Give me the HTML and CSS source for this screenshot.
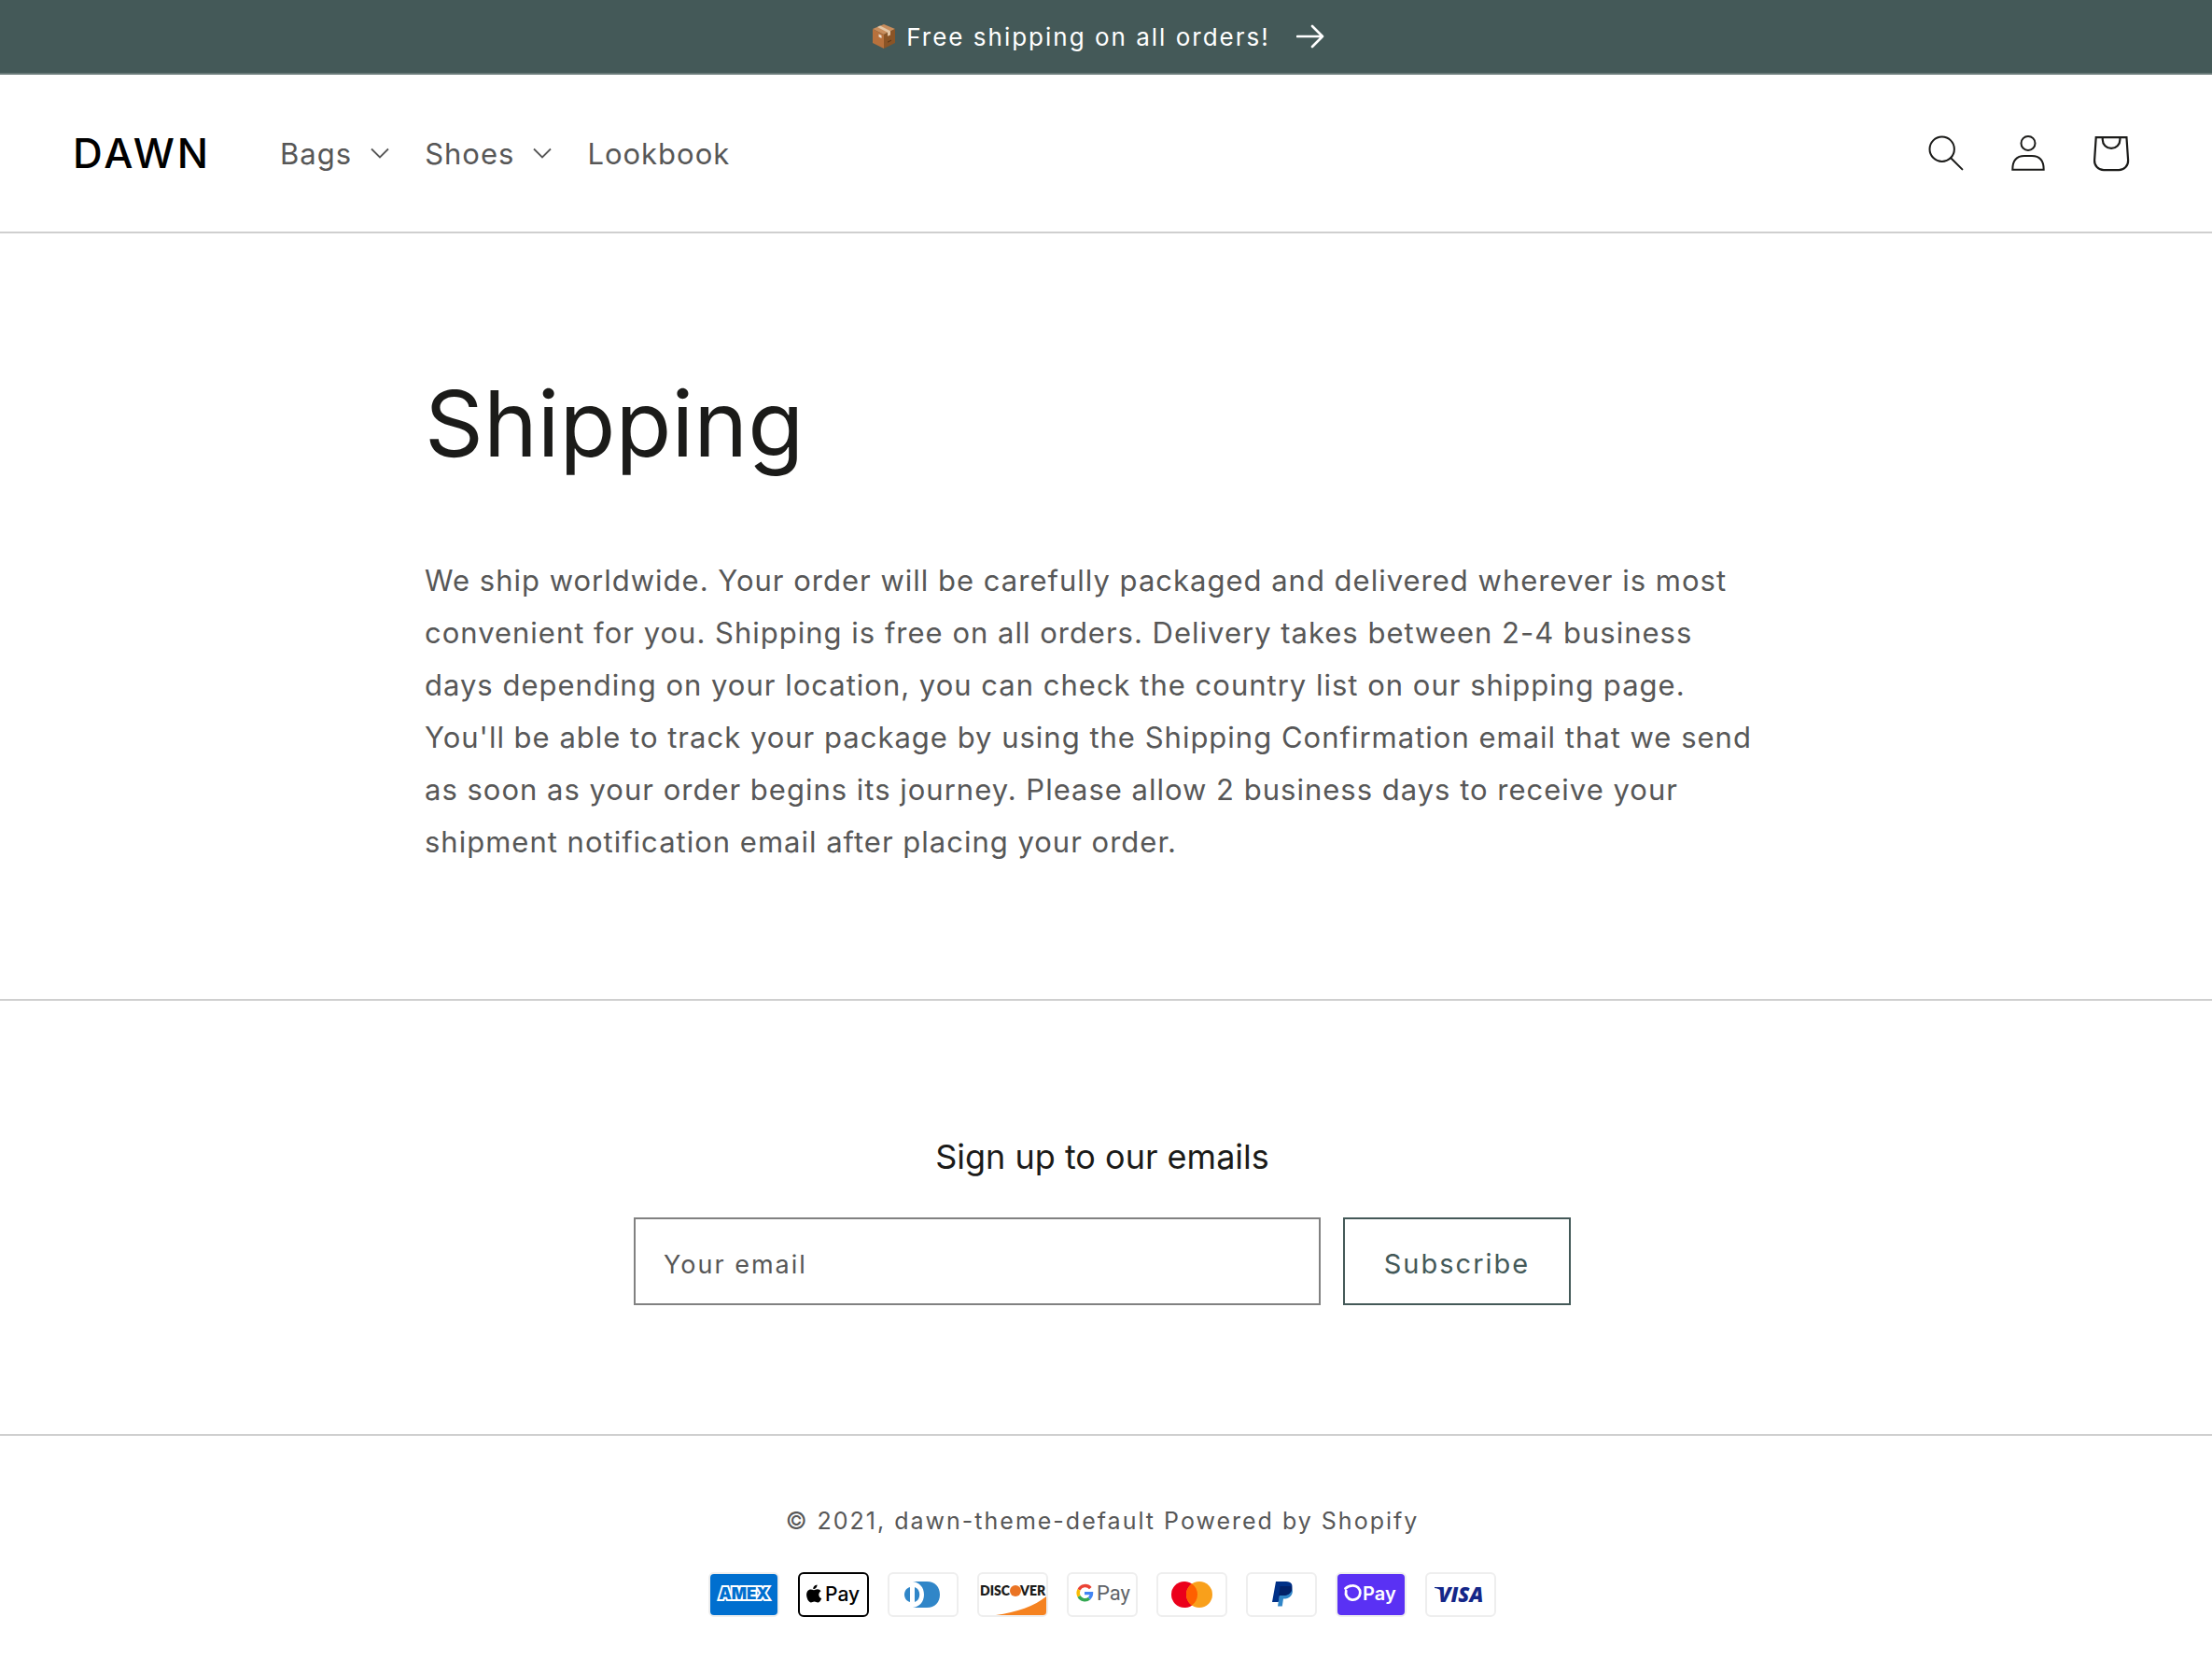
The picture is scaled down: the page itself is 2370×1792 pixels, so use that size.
FILE: index.html
```html
<!DOCTYPE html>
<html lang="en">
<head>
<meta charset="utf-8">
<meta name="viewport" content="width=device-width, initial-scale=1">
<title>Shipping – DAWN</title>
<link rel="stylesheet" href="styles.css">
</head>
<body>
<a class="announcement" href="#">
  <svg class="announcement-box" viewBox="0 0 24 26" aria-hidden="true">
    <path fill="#c98d5c" d="M12 0 24 5 12 11 0 5z"/>
    <path fill="#b8713c" d="M0 5l12 6v15L0 20z"/>
    <path fill="#8a5426" d="M24 5l-12 6v15l12-6z"/>
    <path fill="#e3c6a6" d="M5 3l3-1.400L19 7.200v4.300l-3 1.300V8.800z"/>
    <path fill="#e8dccd" d="M6.500 10.500l3 1.500v3l-3-1.500z"/>
    <path fill="#5f3817" d="M16 18.500l4-2v1.200l-4 2z"/>
  </svg>
  <span>Free shipping on all orders!</span>
  <svg class="announcement-arrow" viewBox="0 0 30 26" aria-hidden="true">
    <path d="M1 13h27M17 2l11 11-11 11" fill="none" stroke="currentColor" stroke-width="2.600" stroke-linecap="round" stroke-linejoin="round"/>
  </svg>
</a>

<header class="header">
  <a class="logo" href="#">DAWN</a>
  <nav class="nav">
    <button class="nav-item" type="button">Bags
      <svg class="caret" viewBox="0 0 20 12" aria-hidden="true"><path d="M1 1.500l9 9 9-9" fill="none" stroke="currentColor" stroke-width="1.800"/></svg>
    </button>
    <button class="nav-item" type="button">Shoes
      <svg class="caret" viewBox="0 0 20 12" aria-hidden="true"><path d="M1 1.500l9 9 9-9" fill="none" stroke="currentColor" stroke-width="1.800"/></svg>
    </button>
    <a class="nav-item" href="#">Lookbook</a>
  </nav>
  <div class="header-icons">
    <button class="icon-button" type="button" aria-label="Search">
      <svg viewBox="0 0 44 44" width="44" height="44" fill="none" stroke="currentColor" stroke-width="2"><circle cx="17.700" cy="17.700" r="13.200"/><path stroke-linecap="round" d="M27.200 27.200l12.200 12.200"/></svg>
    </button>
    <a class="icon-button" href="#" aria-label="Log in">
      <svg viewBox="0 0 44 44" width="44" height="44" fill="none" stroke="currentColor" stroke-width="2"><circle cx="22" cy="11.400" r="7.500"/><path d="M5.300 39.700C5.300 30 9 25 18 25h8c9 0 12.700 5 12.700 14.700z"/></svg>
    </a>
    <a class="icon-button" href="#" aria-label="Cart">
      <svg viewBox="0 0 40 40" width="88" height="88" fill="currentColor" fill-rule="evenodd"><path d="M15.750 11.800h-3.160l-.770 11.600a5 5 0 0 0 4.990 5.340h7.380a5 5 0 0 0 4.990-5.330L28.400 11.800zm0 1h-2.220l-.710 10.670a4 4 0 0 0 3.990 4.270h7.380a4 4 0 0 0 4-4.270l-.720-10.670h-2.220v.630a4.750 4.750 0 1 1-9.500 0zm8.500 0h-7.500v.630a3.750 3.750 0 1 0 7.500 0z"/></svg>
    </a>
  </div>
</header>

<main class="page">
  <article class="article">
    <h1>Shipping</h1>
    <p>We ship worldwide. Your order will be carefully packaged and delivered wherever is most convenient for you. Shipping is free on all orders. Delivery takes between 2-4 business days depending on your location, you can check the country list on our shipping page. You'll be able to track your package by using the Shipping Confirmation email that we send as soon as your order begins its journey. Please allow 2 business days to receive your shipment notification email after placing your order.</p>
  </article>
</main>

<footer>
  <section class="newsletter">
    <h2>Sign up to our emails</h2>
    <form class="newsletter-form">
      <input class="email" type="email" placeholder="Your email" aria-label="Your email">
      <button class="subscribe" type="submit">Subscribe</button>
    </form>
  </section>
  <section class="legal">
    <p>© 2021, <a href="#">dawn-theme-default</a> <a href="#">Powered by Shopify</a></p>
    <ul class="payments">
      <li><svg viewBox="0 0 76 48" role="img" aria-label="American Express">
        <rect class="card-edge" x="1" y="1" width="74" height="46" rx="5"/><rect x="2" y="2" width="72" height="44" rx="4" fill="#006fcf"/>
        <text x="38" y="29" text-anchor="middle" class="amex">AMEX</text>
      </svg></li>
      <li><svg viewBox="0 0 76 48" role="img" aria-label="Apple Pay">
        <rect x="1" y="1" width="74" height="46" rx="5" fill="#fff" stroke="#000" stroke-width="2"/>
        <path d="M20.500 13.500c.2 2.500-1.800 4.600-4.200 4.500-.2-2.300 1.900-4.400 4.200-4.500zM17 19.300c1 0 2-1 3.800-1 1.600 0 3 .8 3.800 2-3.400 2-2.800 6.600.6 7.900-.8 2-2.300 4.300-4 4.300-1.500 0-2-.9-3.700-.9s-2.300.9-3.700.9c-3 0-6.500-8.200-3.600-12.200 2-2.700 4.900-1.700 6.800-1z"/>
        <text x="29" y="31" class="apple-pay">Pay</text>
      </svg></li>
      <li><svg viewBox="0 0 76 48" role="img" aria-label="Diners Club">
        <rect class="card-edge" x="1" y="1" width="74" height="46" rx="5"/>
        <path fill="#3086c8" d="M27 10h15c9 0 14 6 14 14s-5 14-14 14H27c7-1 12-6 12-14s-5-13-12-14zM24 16v16c-8-2-8-14 0-16zM29 16c7 2 7 14 0 16z"/>
      </svg></li>
      <li><svg viewBox="0 0 76 48" role="img" aria-label="Discover">
        <rect class="card-edge" x="1" y="1" width="74" height="46" rx="5"/>
        <path fill="#f58220" d="M74 26v16c0 3-1 4-4 4H20c22-3 42-10 54-20z"/>
        <text x="3" y="25" class="discover">DISC</text><circle cx="41" cy="20" r="6" fill="#ea7424"/><text x="46" y="25" class="discover">VER</text>
      </svg></li>
      <li><svg viewBox="0 0 76 48" role="img" aria-label="Google Pay">
        <rect class="card-edge" x="1" y="1" width="74" height="46" rx="5"/>
        <g fill="none" stroke-width="3.400"><path stroke="#ea4335" d="M25.300 17.200A7.300 7.300 0 0 0 13 18.900"/><path stroke="#fbbc04" d="M13 18.900a7.300 7.300 0 0 0 0 7"/><path stroke="#34a853" d="M13 25.900a7.300 7.300 0 0 0 11 2.200"/><path stroke="#4285f4" d="M24 28.100a7.300 7.300 0 0 0 2.500-5.500H19"/></g>
        <text x="32" y="30" class="google-pay">Pay</text>
      </svg></li>
      <li><svg viewBox="0 0 76 48" role="img" aria-label="Mastercard">
        <rect class="card-edge" x="1" y="1" width="74" height="46" rx="5"/>
        <circle cx="30" cy="24" r="14" fill="#eb001b"/><circle cx="46" cy="24" r="14" fill="#f9a01b"/><path fill="#ff5f00" d="M38 12.500a14 14 0 0 1 0 23 14 14 0 0 1 0-23z"/>
      </svg></li>
      <li><svg viewBox="0 0 76 48" role="img" aria-label="PayPal">
        <rect class="card-edge" x="1" y="1" width="74" height="46" rx="5"/>
        <path fill="#3086c8" d="M48 16c3 3 2 7 0 9.500-2 2.500-5 3-8 3l-1.200 8H34l3-20z"/>
        <path fill="#003087" d="M32 10h11c6 0 7.500 4 6 8.500S44 25 40 25h-4l-1.300 7H28z"/>
        <path fill="#012169" d="M36.500 15H48c1.500 1 1.700 2.500 1 4.500-1.500 4-5 5.500-9 5.500h-4.800z"/>
      </svg></li>
      <li><svg viewBox="0 0 76 48" role="img" aria-label="Shop Pay">
        <rect class="card-edge" x="1" y="1" width="74" height="46" rx="5"/><rect x="2" y="2" width="72" height="44" rx="4" fill="#5a31f4"/>
        <path fill="none" stroke="#fff" stroke-width="2.800" stroke-linecap="round" d="M10.500 17.500C13 15 15.500 14.300 18.200 14.300A7.700 7.700 0 1 1 11.200 20"/>
        <text x="29" y="30" class="shop-pay">Pay</text>
      </svg></li>
      <li><svg viewBox="0 0 76 48" role="img" aria-label="Visa">
        <rect class="card-edge" x="1" y="1" width="74" height="46" rx="5"/>
        <path fill="#142688" d="M10 16h6l3 3-1 3c-1-3-4-4.500-8-5z"/>
        <text x="14" y="32" class="visa">VISA</text>
      </svg></li>
    </ul>
  </section>
</footer>
</body>
</html>
```
FILE: styles.css
```css
* { box-sizing: border-box; margin: 0; }

body {
  background: #fff;
  color: #575757;
  font-family: Inter, "Liberation Sans", sans-serif;
  font-size: 31px;
  letter-spacing: 1px;
}

a { color: inherit; text-decoration: none; }
button, input { font: inherit; letter-spacing: inherit; color: inherit; border-radius: 0; }
svg { display: block; flex: none; }

.announcement {
  display: flex;
  align-items: center;
  justify-content: center;
  height: 80px;
  padding-right: 16px;
  background: #445958;
  border-bottom: 2px solid #697a79;
  color: #fff;
  font-size: 26px;
  letter-spacing: 2px;
}
.announcement-box { width: 24px; height: 26px; margin-right: 12px; }
.announcement-arrow { width: 30px; height: 26px; margin-left: 28px; }

.header {
  display: flex;
  align-items: center;
  height: 170px;
  padding: 0 65px 0 78px;
  border-bottom: 2px solid #cfcfcf;
}
.logo { color: #000; font-size: 44px; font-weight: 500; letter-spacing: 3px; }
.nav { display: flex; align-items: center; gap: 38px; margin-left: 74px; }
.nav-item { display: flex; align-items: center; gap: 20px; padding: 0; border: 0; background: none; }
.caret { width: 20px; height: 12px; }
.header-icons { display: flex; margin-left: auto; color: #1b1b19; }
.icon-button {
  display: flex;
  align-items: center;
  justify-content: center;
  width: 88px;
  height: 88px;
  padding: 0;
  border: 0;
  background: none;
}

.page { padding: 136px 8px 140px 0; }
.article { max-width: 1452px; margin: 0 auto; }
h1 {
  margin-bottom: 72px;
  color: #1b1b19;
  font-size: 98px;
  font-weight: 400;
  line-height: 136px;
  letter-spacing: 0;
}
.article p { padding-right: 16px; line-height: 56px; }

.newsletter {
  padding: 143px 8px 138px 0;
  border-top: 2px solid #cfcfcf;
  text-align: center;
}
h2 {
  margin-bottom: 41px;
  color: #1b1b19;
  font-size: 36px;
  font-weight: 400;
  line-height: 48px;
  letter-spacing: 0;
}
.newsletter-form { display: flex; gap: 24px; max-width: 1004px; height: 94px; margin: 0 auto; }
.email {
  flex: 1;
  min-width: 0;
  padding: 6px 30px 0;
  border: 2px solid #818181;
  background: #fff;
  font-size: 27px;
  letter-spacing: 2px;
}
.email::placeholder { color: #575757; opacity: 1; }
.subscribe {
  width: 244px;
  padding: 4px 0 0;
  border: 2px solid #445958;
  background: #fff;
  color: #445958;
  font-size: 29px;
  letter-spacing: 2px;
}

.legal {
  padding: 67px 8px 60px 0;
  border-top: 2px solid #cfcfcf;
  text-align: center;
  font-size: 25px;
  line-height: 48px;
  letter-spacing: 2px;
}
.payments { display: flex; justify-content: center; gap: 20px; margin-top: 31px; padding: 0; list-style: none; }
.payments svg { width: 76px; height: 48px; letter-spacing: 0; }
.card-edge { fill: #fff; stroke: #eee; stroke-width: 2px; }
.amex { font: 900 17px Inter, sans-serif; fill: #006fcf; stroke: #fff; stroke-width: 4px; paint-order: stroke; }
.apple-pay { font: 500 21px Inter, sans-serif; fill: #000; }
.discover { font: 800 14px Lato, sans-serif; fill: #1b1b19; }
.google-pay { font: 400 22px Roboto, sans-serif; fill: #5f6368; }
.shop-pay { font: 600 20px Inter, sans-serif; fill: #fff; }
.visa { font: italic 800 22px "Open Sans", sans-serif; fill: #142688; }
```
